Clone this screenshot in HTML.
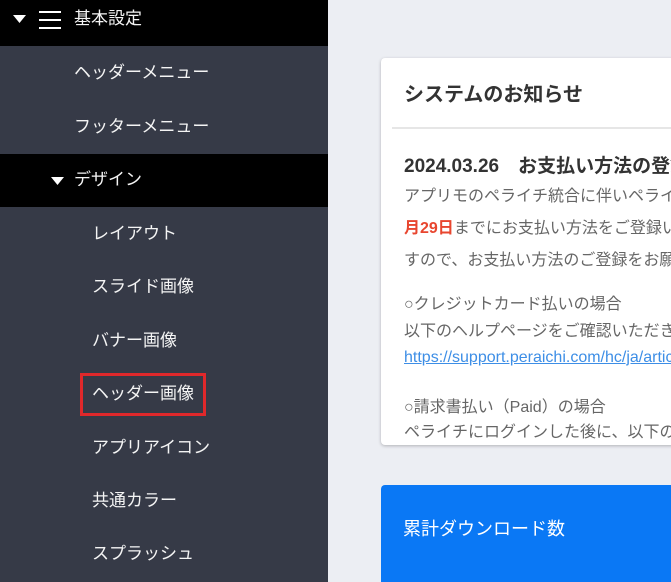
<!DOCTYPE html>
<html style="width:671px;height:582px;overflow:hidden"><head><meta charset="utf-8"><style>
*{margin:0;padding:0;box-sizing:border-box}
body{width:671px;height:582px;overflow:hidden;background:#eceef3;font-family:"Liberation Sans","Noto Sans CJK JP",sans-serif;position:relative}
.side{position:absolute;left:0;top:0;width:328px;height:582px;background:#363a47}
.row{position:absolute;left:0;width:328px;color:#f4f4f4;font-size:17px;line-height:20px}
.blk{background:#000}
.t{position:absolute;white-space:nowrap}
.card{position:absolute;left:381px;top:58px;width:320px;height:387px;background:#fff;border-radius:4px;box-shadow:0 1px 3px rgba(0,0,0,.25);overflow:hidden}
.p{position:absolute;left:23px;white-space:nowrap;font-size:16px;color:#666;line-height:20px}
.blue{position:absolute;left:381px;top:485px;width:300px;height:97px;background:#0a78f5;border-radius:4px 0 0 0}
</style></head><body>
<div class="side">
 <div class="row blk" style="top:0;height:46px">
  <svg class="t" style="left:13px;top:15px" width="13" height="9"><path d="M0 0H13L6.5 8Z" fill="#fff"/></svg>
  <svg class="t" style="left:38px;top:9px" width="24" height="22"><rect x="1" y="2" width="22" height="2" fill="#fff"/><rect x="1" y="10" width="22" height="2" fill="#fff"/><rect x="1" y="18" width="22" height="2" fill="#fff"/></svg>
  <span class="t" style="left:74px;top:9px">基本設定</span></div>
 <div class="row" style="top:63px"><span class="t" style="left:74px">ヘッダーメニュー</span></div>
 <div class="row" style="top:117px"><span class="t" style="left:74px">フッターメニュー</span></div>
 <div class="row blk" style="top:154px;height:53px">
  <svg class="t" style="left:51px;top:23px" width="13" height="9"><path d="M0 0H13L6.5 8Z" fill="#fff"/></svg>
  <span class="t" style="left:74px;top:16px">デザイン</span></div>
 <div class="row" style="top:224px"><span class="t" style="left:92px">レイアウト</span></div>
 <div class="row" style="top:277px"><span class="t" style="left:92px">スライド画像</span></div>
 <div class="row" style="top:331px"><span class="t" style="left:92px">バナー画像</span></div>
 <div style="position:absolute;left:80px;top:373px;width:126px;height:43px;border:3px solid #e0282b"></div>
 <div class="row" style="top:384px"><span class="t" style="left:92px">ヘッダー画像</span></div>
 <div class="row" style="top:438px"><span class="t" style="left:92px">アプリアイコン</span></div>
 <div class="row" style="top:491px"><span class="t" style="left:92px">共通カラー</span></div>
 <div class="row" style="top:544px"><span class="t" style="left:92px">スプラッシュ</span></div>
</div>
<div class="card">
 <div class="p" style="top:27px;font-size:20px;color:#333;font-weight:bold">システムのお知らせ</div>
 <div style="position:absolute;left:11px;top:69px;width:320px;height:2px;background:#e6e6e6"></div>
 <div class="p" style="top:98px;font-size:19px;color:#333;font-weight:bold;line-height:22px">2024.03.26　お支払い方法の登録について</div>
 <div class="p" style="top:129px">アプリモのペライチ統合に伴いペライチへの移行</div>
 <div class="p" style="top:161px"><b style="color:#e8462f">月29日</b>までにお支払い方法をご登録いただく必要</div>
 <div class="p" style="top:193px">すので、お支払い方法のご登録をお願いいたします</div>
 <div class="p" style="top:237px">○クレジットカード払いの場合</div>
 <div class="p" style="top:264px">以下のヘルプページをご確認いただきますよう</div>
 <div class="p" style="top:290px;color:#3d8ee6;text-decoration:underline">https://support.peraichi.com/hc/ja/articles</div>
 <div class="p" style="top:340px">○請求書払い（Paid）の場合</div>
 <div class="p" style="top:365px">ペライチにログインした後に、以下のページ</div>
</div>
<div class="blue"><span class="t" style="left:22px;top:30px;color:#fff;font-size:18px">累計ダウンロード数</span></div>
</body></html>
